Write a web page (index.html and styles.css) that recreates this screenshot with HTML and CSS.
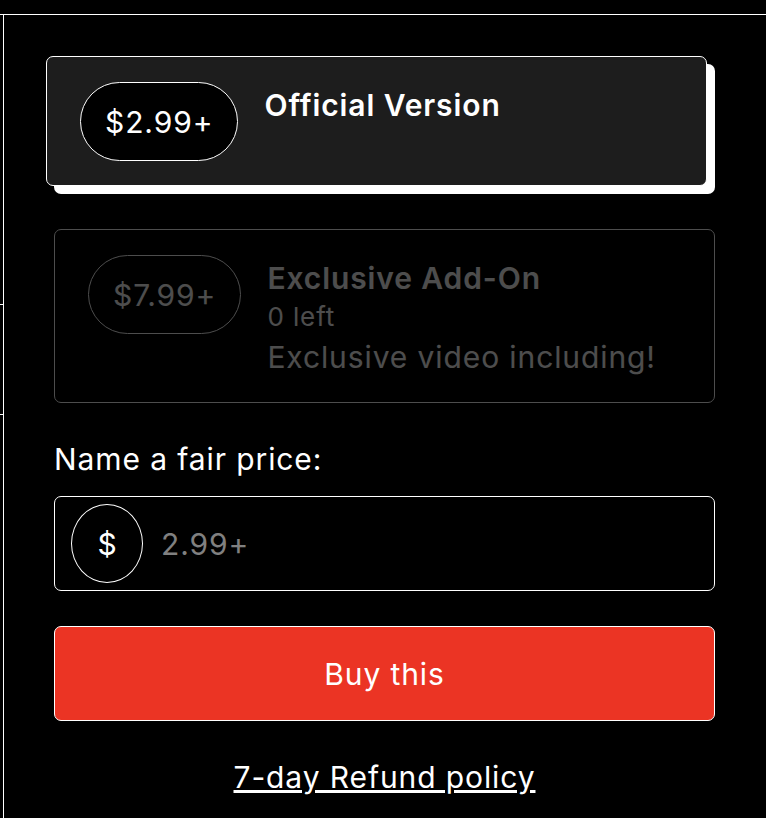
FILE: index.html
```html
<!DOCTYPE html>
<html lang="en">
<head>
<meta charset="utf-8">
<title>Official Version</title>
<link rel="stylesheet" href="styles.css">
</head>
<body>

<div class="frame">
	<div class="rail">
		<div class="rail-cell first"></div>
		<div class="rail-cell second"></div>
	</div>

	<section class="panel">
		<div class="options">
			<label class="option selected">
				<span class="pill">$2.99+</span>
				<span class="option-info">
					<span class="option-title">Official Version</span>
				</span>
			</label>
			<label class="option disabled">
				<span class="pill">$7.99+</span>
				<span class="option-info">
					<span class="option-title">Exclusive Add-On</span>
					<span class="option-left">0 left</span>
					<span class="option-desc">Exclusive video including!</span>
				</span>
			</label>
		</div>

		<div class="field">
			<label class="field-label" for="price">Name a fair price:</label>
			<div class="price-input">
				<span class="currency">$</span>
				<input id="price" type="text" placeholder="2.99+">
			</div>
		</div>

		<button class="buy" type="button">Buy this</button>
		<a class="refund" href="#">7-day Refund policy</a>
	</section>
</div>

</body>
</html>
```

FILE: styles.css
```css
body {
	margin: 0;
	background: #000;
	color: #fff;
	font-family: Inter, "Noto Sans", sans-serif;
	font-size: 30px;
	line-height: 42px;
	letter-spacing: 0.9px;
}
.frame {
	margin-top: 14px;
	border-top: 1px solid #fff;
	display: grid;
	grid-template-columns: 3px 1fr;
}
.rail-cell {
	border-bottom: 1px solid #fff;
}
.rail-cell.first {
	height: 289px;
}
.rail-cell.second {
	height: 109px;
}
.panel {
	border-left: 1px solid #fff;
	padding: 49px 51px 40px 50px;
	display: flex;
	flex-direction: column;
	gap: 35px;
}

/* options */
.options {
	display: flex;
	flex-direction: column;
	gap: 35px;
}
.option {
	display: flex;
	align-items: flex-start;
	gap: 26px;
	padding: 25px 33px 24px;
	border: 1px solid #fff;
	border-radius: 7px;
	background: #000;
}
.option.selected {
	background: #1d1d1d;
	transform: translate(-8px, -8px);
	box-shadow: 8px 8px 0 #fff;
}
.option.disabled {
	opacity: .3;
}
.pill {
	flex: none;
	box-sizing: border-box;
	height: 79px;
	padding: 0 24px;
	border: 1px solid #fff;
	border-radius: 999px;
	background: #000;
	display: flex;
	align-items: center;
}
.option-info {
	display: flex;
	flex-direction: column;
	padding-top: 2px;
}
.option-title {
	font-weight: 600;
}
.option-left {
	font-size: 26px;
	line-height: 36px;
}
.option-desc {
	margin-top: 1px;
}

/* price field */
.field {
	display: flex;
	flex-direction: column;
	gap: 16px;
}
.price-input {
	box-sizing: border-box;
	height: 95px;
	display: flex;
	align-items: center;
	gap: 18px;
	padding: 0 16px;
	border: 1px solid #fff;
	border-radius: 7px;
}
.currency {
	box-sizing: border-box;
	width: 72px;
	height: 79px;
	border: 1px solid #fff;
	border-radius: 50%;
	display: flex;
	align-items: center;
	justify-content: center;
	letter-spacing: 0;
}
.price-input input {
	flex: 1;
	min-width: 0;
	border: none;
	outline: none;
	background: transparent;
	color: #fff;
	font: inherit;
	letter-spacing: inherit;
	padding: 0;
}
.price-input input::placeholder {
	color: #808080;
}

.buy {
	height: 95px;
	border: 1px solid #fff;
	border-radius: 7px;
	background: #eb3424;
	color: #fff;
	font: inherit;
	letter-spacing: inherit;
}
.refund {
	align-self: center;
	color: #fff;
}
```
